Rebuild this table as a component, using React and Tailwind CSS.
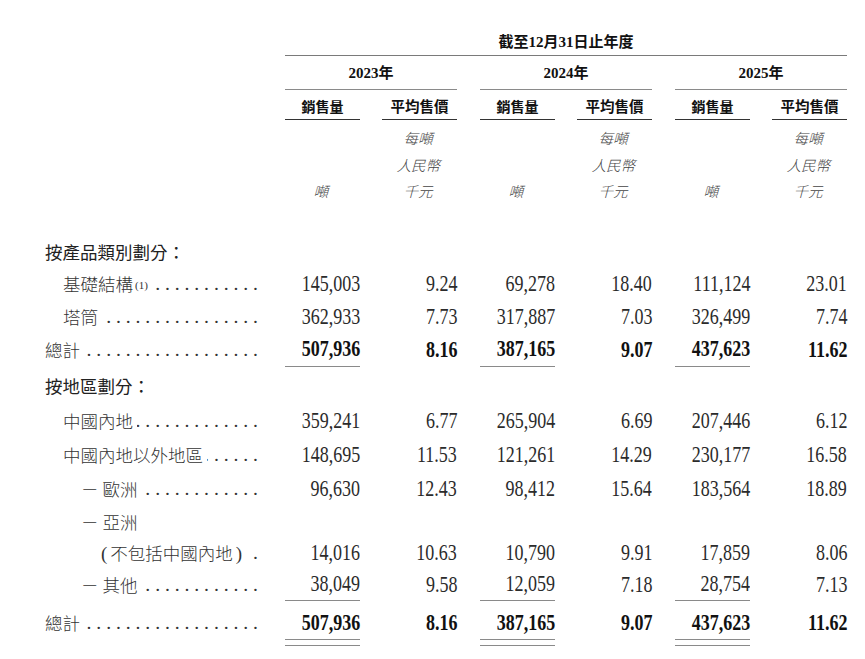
const serif = "font-['Liberation_Serif','Noto_Sans_CJK_TC',serif]";
const cjk = "font-['Noto_Sans_CJK_TC','Noto_Sans_CJK_SC',sans-serif]";

const Num = ({ children, bold }) => (
    <span
        className={`inline-block origin-right scale-x-[0.8] text-[22.5px] leading-none ${serif} ${
            bold ? 'font-bold text-[#111]' : 'text-[#2b2b2b]'
        }`}
    >
        {children}
    </span>
);

const Label = ({ text, sup, dots, indent, dash, paren }) => (
    <div className={`flex items-center min-w-0 w-full ${indent}`}>
        {dash && <span className={`${cjk} font-light text-[17.5px] leading-none text-[#333] mr-[4px]`}>－</span>}
        {paren && <span className={`${serif} text-[19px] leading-none text-[#333] mr-[3px]`}>(</span>}
        <span className={`${cjk} font-light text-[17.5px] leading-none text-[#333] whitespace-nowrap`}>{text}</span>
        {paren && <span className={`${serif} text-[19px] leading-none text-[#333] ml-[3px] mr-[6px]`}>)</span>}
        {sup && <span className={`${serif} text-[11px] leading-none text-[#333] ml-[2px] self-start mt-[6px]`}>{sup}</span>}
        {dots && (
            <span
                dir="rtl"
                className={`flex-1 min-w-0 overflow-hidden whitespace-nowrap ml-[4px] ${serif} text-[19.6px] leading-none text-[#333]`}
            >
                {'. '.repeat(40)}
            </span>
        )}
    </div>
);

const Row = ({ h, label, values, bold, line, pt = '' }) => {
    const double = line === 'double';
    return (
        <div className={`flex ${h}`}>
            <div className="w-[285px] pl-[45px] pr-[27px] flex flex-col">
                <div className={`flex-1 flex items-center ${pt}`}>{label}</div>
                {double && <div className="h-[7px]" />}
            </div>
            <div className="flex gap-[23px]">
                {[0, 1, 2].map((g) => (
                    <div key={g} className="flex gap-[22px]">
                        {[0, 1].map((c) => {
                            const v = values ? values[g * 2 + c] : null;
                            const sales = c === 0;
                            return (
                                <div
                                    key={c}
                                    className={`w-[75px] flex flex-col ${
                                        line === 'single' && sales ? 'border-b-[1.5px] border-[#8a8a8a]' : ''
                                    }`}
                                >
                                    <div className={`flex-1 flex items-center justify-end ${pt}`}>
                                        {v && <Num bold={bold}>{v}</Num>}
                                    </div>
                                    {double && (
                                        <div
                                            className={`h-[7px] ${
                                                sales ? 'border-y-[1.5px] border-[#8a8a8a]' : ''
                                            }`}
                                        />
                                    )}
                                </div>
                            );
                        })}
                    </div>
                ))}
            </div>
        </div>
    );
};

const Heading = ({ text }) => (
    <span className={`${cjk} text-[17.5px] leading-none text-[#222] whitespace-nowrap`}>{text}</span>
);

const Unit = ({ t }) => (
    <div className="h-[26.5px] flex items-center justify-center">
        <span className={`inline-block [transform:skewX(-15deg)] ${cjk} font-light text-[14.5px] leading-none text-[#444]`}>{t}</span>
    </div>
);

export default function App() {
    const years = ['2023', '2024', '2025'];
    const total = ['507,936', '8.16', '387,165', '9.07', '437,623', '11.62'];

    return (
        <div className="w-[865px] h-[659px] bg-white pt-[30px] overflow-hidden">
            {/* title */}
            <div className="flex">
                <div className="w-[285px]" />
                <div className="w-[562px] h-[25.5px] border-b-[1.5px] border-[#7a7a7a] flex items-center justify-center">
                    <span className={`${serif} font-bold text-[15px] leading-none text-[#111]`}>
                        截至12月31日止年度
                    </span>
                </div>
            </div>

            {/* years */}
            <div className="flex">
                <div className="w-[285px]" />
                <div className="flex gap-[23px]">
                    {years.map((y) => (
                        <div
                            key={y}
                            className="w-[172px] h-[34px] pt-[3px] border-b-[1.5px] border-[#8a8a8a] flex items-center justify-center"
                        >
                            <span className={`${serif} font-bold text-[15px] leading-none text-[#111]`}>{y}年</span>
                        </div>
                    ))}
                </div>
            </div>

            {/* column heads */}
            <div className="flex">
                <div className="w-[285px]" />
                <div className="flex gap-[23px]">
                    {years.map((y) => (
                        <div key={y} className="flex gap-[22px]">
                            <div className="w-[75px] h-[30.5px] pt-[4px] border-b-[1.5px] border-[#333] flex items-center justify-center">
                                <span className={`${cjk} font-bold text-[14px] leading-none text-[#111]`}>銷售量</span>
                            </div>
                            <div className="w-[75px] h-[30.5px] pt-[4px] border-b-[1.5px] border-[#333] flex items-center justify-center">
                                <span className={`${cjk} font-bold text-[14.5px] leading-none text-[#111]`}>平均售價</span>
                            </div>
                        </div>
                    ))}
                </div>
            </div>

            {/* units */}
            <div className="flex h-[116.5px] pt-[5px]">
                <div className="w-[285px]" />
                <div className="flex gap-[23px]">
                    {years.map((y) => (
                        <div key={y} className="flex gap-[22px]">
                            <div className="w-[75px]">
                                {['', '', '噸'].map((t, i) => (
                                    <Unit key={i} t={t} />
                                ))}
                            </div>
                            <div className="w-[75px]">
                                {['每噸', '人民幣', '千元'].map((t, i) => (
                                    <Unit key={i} t={t} />
                                ))}
                            </div>
                        </div>
                    ))}
                </div>
            </div>

            {/* by product */}
            <Row h="h-[31px]" label={<Heading text="按產品類別劃分：" />} />
            <Row
                h="h-[32.5px]"
                label={<Label text="基礎結構" sup="(1)" dots indent="pl-[18px]" />}
                values={['145,003', '9.24', '69,278', '18.40', '111,124', '23.01']}
            />
            <Row
                h="h-[33.5px]"
                label={<Label text="塔筒" dots indent="pl-[18px]" />}
                values={['362,933', '7.73', '317,887', '7.03', '326,499', '7.74']}
            />
            <Row h="h-[33px]" label={<Label text="總計" dots />} values={total} bold line="single" />

            {/* by region */}
            <Row h="h-[37.5px]" label={<Heading text="按地區劃分：" />} />
            <Row
                h="h-[34px]"
                label={<Label text="中國內地" dots indent="pl-[18px]" />}
                values={['359,241', '6.77', '265,904', '6.69', '207,446', '6.12']}
            />
            <Row
                h="h-[34px]"
                label={<Label text="中國內地以外地區" dots indent="pl-[18px]" />}
                values={['148,695', '11.53', '121,261', '14.29', '230,177', '16.58']}
            />
            <Row
                h="h-[33.5px]"
                label={<Label text="歐洲" dash dots indent="pl-[36px]" />}
                values={['96,630', '12.43', '98,412', '15.64', '183,564', '18.89']}
            />
            <Row h="h-[32px]" label={<Label text="亞洲" dash indent="pl-[36px]" />} />
            <Row
                h="h-[31px]"
                label={<Label text="不包括中國內地" paren dots indent="pl-[56px]" />}
                values={['14,016', '10.63', '10,790', '9.91', '17,859', '8.06']}
            />
            <Row
                h="h-[32.5px]"
                label={<Label text="其他" dash dots indent="pl-[36px]" />}
                values={['38,049', '9.58', '12,059', '7.18', '28,754', '7.13']}
                line="single"
            />
            <Row h="h-[45px]" pt="pt-[6px]" label={<Label text="總計" dots />} values={total} bold line="double" />
        </div>
    );
}
